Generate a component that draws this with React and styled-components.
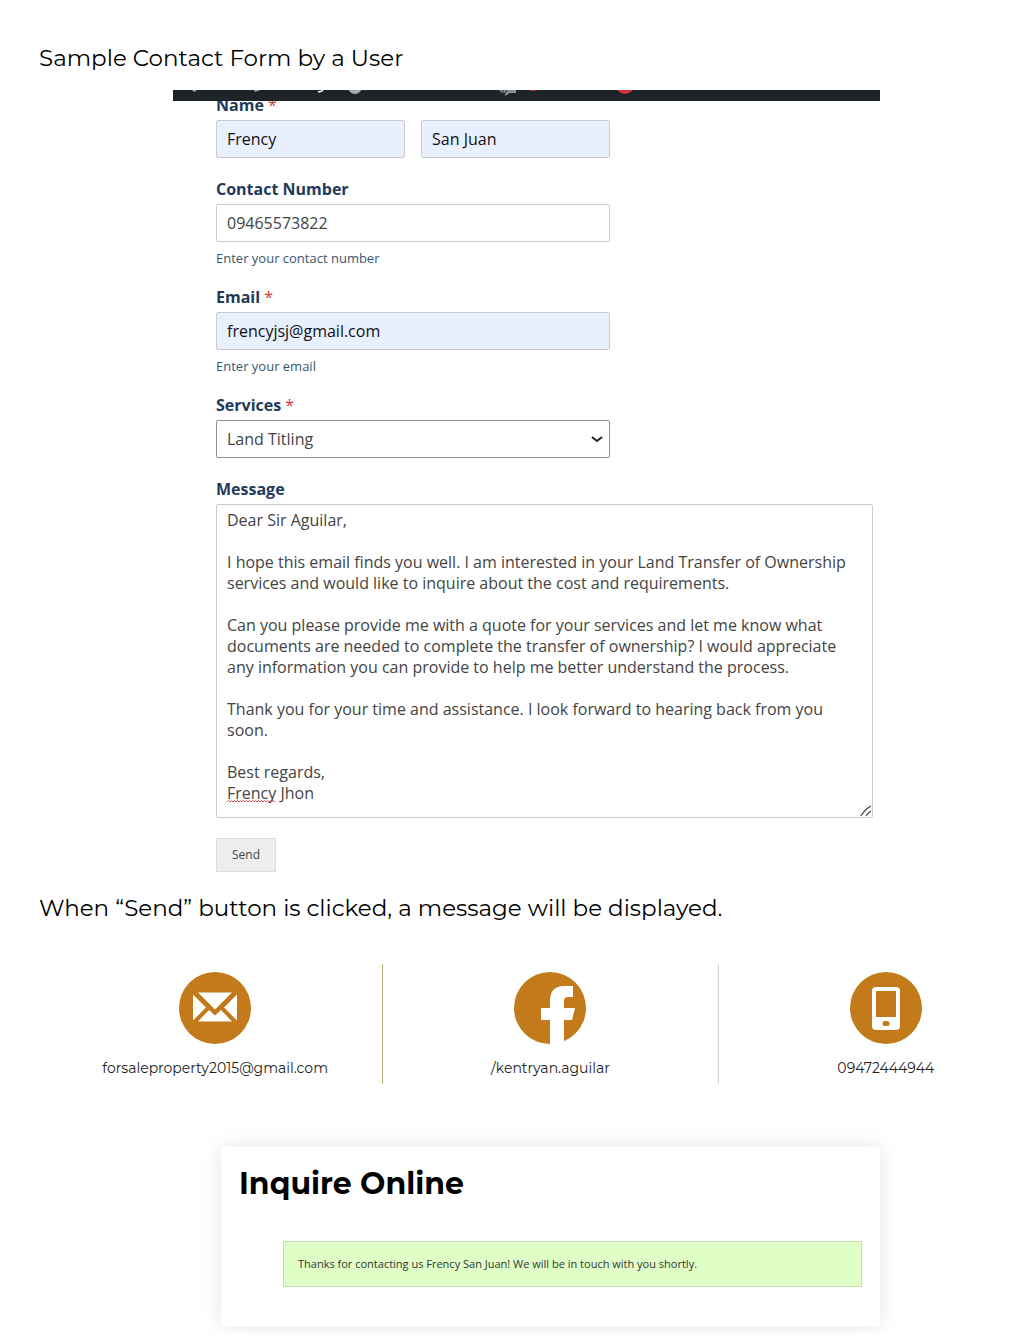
import React from "react";
import styled, { createGlobalStyle } from "styled-components";

const display = '"Montserrat", Inter, "Open Sans", sans-serif';
const body = '"Open Sans", "Noto Sans", sans-serif';

const GlobalStyle = createGlobalStyle`
  *, *::before, *::after { box-sizing: border-box; }
  body { margin: 0; background: #fff; color: #000; font-family: ${body}; }
`;

const Page = styled.main`
  display: flex;
  flex-direction: column;
  padding: 42px 0 8px;
  overflow: hidden;
`;

const Caption = styled.h2`
  margin: 0 39px;
  font: 400 23px/32px ${display};
`;

const FormShot = styled.section`
  margin: 16px 132px 20px 173px;
`;

const AdminBar = styled.div`
  position: relative;
  z-index: 1;
  height: 11px;
  overflow: hidden;
  background: #1d2327;
  svg { display: block; }
`;

const Form = styled.form`
  display: flex;
  flex-direction: column;
  gap: 20px;
  margin-top: -7px;
  padding: 0 7px 0 43px;
`;

const Field = styled.div`
  display: flex;
  flex-direction: column;
  width: ${(p) => (p.$wide ? "100%" : "60%")};
`;

const Label = styled.label`
  margin-bottom: 4px;
  color: #1f3a5a;
  font: 700 16px/22px ${body};
`;

const Required = styled.span`
  color: #d63637;
  font-weight: 400;
`;

const NameRow = styled.div`
  display: grid;
  grid-template-columns: 1fr 1fr;
  gap: 16px;
`;

const Input = styled.input`
  width: 100%;
  min-width: 0;
  height: 38px;
  padding: 0 10px;
  border: 1px solid #ccc;
  border-radius: 2px;
  background: ${(p) => (p.$filled ? "#e8f0fe" : "#fff")};
  color: ${(p) => (p.$filled ? "#111" : "#444")};
  font: 400 16px/22px ${body};
`;

const Hint = styled.small`
  margin-top: 8px;
  color: #3b566e;
  font: 400 13px/16px ${body};
`;

const Control = styled.div`
  position: relative;
`;

const Select = styled.select`
  display: block;
  width: 100%;
  height: 38px;
  padding: 0 10px;
  appearance: none;
  border: 1px solid #8c8f94;
  border-radius: 2px;
  background: #fff;
  color: #444;
  font: 400 16px/22px ${body};
`;

const Chevron = styled.svg`
  position: absolute;
  top: 15px;
  right: 6px;
  pointer-events: none;
`;

const TextArea = styled.textarea`
  display: block;
  width: 100%;
  height: 314px;
  padding: 5px 10px;
  resize: none;
  overflow: hidden;
  border: 1px solid #ccc;
  border-radius: 2px;
  background: #fff;
  color: #444;
  font: 400 16px/21px ${body};
`;

const Grip = styled.svg`
  position: absolute;
  right: 1px;
  bottom: 1px;
  pointer-events: none;
`;

const Squiggle = styled.svg`
  position: absolute;
  left: 11px;
  bottom: 15px;
  pointer-events: none;
`;

const Send = styled.button`
  align-self: flex-start;
  height: 34px;
  padding: 0 15px;
  border: 1px solid #ddd;
  background: #eee;
  color: #444;
  font: 400 12px/16px ${body};
`;

const Contacts = styled.section`
  display: grid;
  grid-template-columns: repeat(3, 1fr);
  margin: 40px -42px 63px 48px;
`;

const Contact = styled.div`
  display: flex;
  flex-direction: column;
  align-items: center;
  gap: 14px;
  padding: 8px 0 6px;
  border-right: 1px solid ${(p) => p.$line};
  svg { display: block; }
`;

const ContactLink = styled.a`
  color: #222;
  text-decoration: none;
  font: 400 14px/20px ${display};
`;

const Card = styled.section`
  margin: 0 132px 0 221px;
  padding: 17px 18px 39px;
  background: #fff;
  box-shadow: 0 0 20px rgba(0, 0, 0, 0.1);
`;

const CardTitle = styled.h1`
  margin: 0 0 37px;
  font: 700 30px/40px ${display};
`;

const Notice = styled.p`
  margin: 0 0 0 44px;
  padding: 14px;
  border: 1px solid #c4dfb0;
  background: #dfffc7;
  color: #333;
  font: 400 11px/16px ${body};
`;

const letter = `Dear Sir Aguilar,

I hope this email finds you well. I am interested in your Land Transfer of Ownership services and would like to inquire about the cost and requirements.

Can you please provide me with a quote for your services and let me know what documents are needed to complete the transfer of ownership? I would appreciate any information you can provide to help me better understand the process.

Thank you for your time and assistance. I look forward to hearing back from you soon.

Best regards,
Frency Jhon`;

const orange = "#c27a1a";

function MailIcon() {
  return (
    <svg width="72" height="72" viewBox="0 0 72 72" aria-hidden="true">
      <circle cx="36" cy="36" r="36" fill={orange} />
      <g fill="#fff">
        <path d="M19 20.500H53L36 37.500Z" />
        <path d="M14 22.500L27 35.500L14 48.500Z" />
        <path d="M58 22.500L45 35.500L58 48.500Z" />
        <path d="M30 38L36 43.500L42 38L53 49.500H19Z" />
      </g>
    </svg>
  );
}

function FacebookIcon() {
  return (
    <svg width="72" height="72" viewBox="0 0 72 72" aria-hidden="true">
      <circle cx="36" cy="36" r="36" fill={orange} />
      <path
        fill="#fff"
        d="M36 73V48H27V36H36V29C36 19 41 14 50 14H59V25H54C51 25 50 26.500 50 29V36H61L58 48H50V73Z"
      />
    </svg>
  );
}

function PhoneIcon() {
  return (
    <svg width="72" height="72" viewBox="0 0 72 72" aria-hidden="true">
      <circle cx="36" cy="36" r="36" fill={orange} />
      <rect x="22" y="15" width="28" height="43" rx="4" fill="#fff" />
      <rect x="26" y="19" width="20" height="26" fill={orange} />
      <rect x="32.500" y="49" width="7" height="5" rx="2.500" fill={orange} />
    </svg>
  );
}

export default function App() {
  return (
    <>
      <GlobalStyle />
      <Page>
        <Caption>Sample Contact Form by a User</Caption>

        <FormShot>
          <AdminBar>
            <svg width="707" height="11" viewBox="0 0 707 11" aria-hidden="true">
              <path d="M19 0H24L21.500 2Z" fill="#a7aaad" />
              <path d="M81 0H87L82 2Z" fill="#a7aaad" />
              <path d="M145 1.500Q148 2.500 150 0" fill="none" stroke="#fff" strokeWidth="1.500" />
              <circle cx="182" cy="-3" r="7" fill="#a7aaad" />
              <path d="M326 0H343V3H337L332 6V3H329Z" fill="#8a8e92" />
              <path d="M330 0V3M334 0L331 5" fill="none" stroke="#1d2327" />
              <circle cx="360" cy="-7" r="8" fill="#d63638" />
              <circle cx="452" cy="-5" r="9" fill="#d63638" />
            </svg>
          </AdminBar>

          <Form onSubmit={(e) => e.preventDefault()}>
            <Field>
              <Label htmlFor="first">
                Name <Required>*</Required>
              </Label>
              <NameRow>
                <Input id="first" $filled defaultValue="Frency" />
                <Input aria-label="Last name" $filled defaultValue="San Juan" />
              </NameRow>
            </Field>

            <Field>
              <Label htmlFor="phone">Contact Number</Label>
              <Input id="phone" type="tel" defaultValue="09465573822" />
              <Hint>Enter your contact number</Hint>
            </Field>

            <Field>
              <Label htmlFor="email">
                Email <Required>*</Required>
              </Label>
              <Input id="email" type="email" $filled defaultValue="frencyjsj@gmail.com" />
              <Hint>Enter your email</Hint>
            </Field>

            <Field>
              <Label htmlFor="service">
                Services <Required>*</Required>
              </Label>
              <Control>
                <Select id="service" defaultValue="Land Titling">
                  <option>Land Titling</option>
                </Select>
                <Chevron width="14" height="8" viewBox="0 0 14 8" aria-hidden="true">
                  <path d="M2 2L7 6L12 2" fill="none" stroke="#222" strokeWidth="2" />
                </Chevron>
              </Control>
            </Field>

            <Field $wide>
              <Label htmlFor="message">Message</Label>
              <Control>
                <TextArea id="message" spellCheck={false} defaultValue={letter} />
                <Squiggle width="49" height="3" viewBox="0 0 49 3" aria-hidden="true">
                  <path
                    d={"M0 2" + " l1.500 -1.500 l1.500 1.500".repeat(16)}
                    fill="none"
                    stroke="#e0484c"
                  />
                </Squiggle>
                <Grip width="12" height="12" viewBox="0 0 12 12" aria-hidden="true">
                  <path d="M1 11Q5 4 11 1M6 11Q8 8 11 6" fill="none" stroke="#444" strokeWidth="1.300" />
                </Grip>
              </Control>
            </Field>

            <Send type="submit">Send</Send>
          </Form>
        </FormShot>

        <Caption>When “Send” button is clicked, a message will be displayed.</Caption>

        <Contacts>
          <Contact $line="#b9ab7c">
            <MailIcon />
            <ContactLink href="mailto:forsaleproperty2015@gmail.com">
              forsaleproperty2015@gmail.com
            </ContactLink>
          </Contact>
          <Contact $line="#d3d0c8">
            <FacebookIcon />
            <ContactLink href="#facebook">/kentryan.aguilar</ContactLink>
          </Contact>
          <Contact $line="transparent">
            <PhoneIcon />
            <ContactLink href="tel:09472444944">09472444944</ContactLink>
          </Contact>
        </Contacts>

        <Card>
          <CardTitle>Inquire Online</CardTitle>
          <Notice role="status">
            Thanks for contacting us Frency San Juan! We will be in touch with you shortly.
          </Notice>
        </Card>
      </Page>
    </>
  );
}
